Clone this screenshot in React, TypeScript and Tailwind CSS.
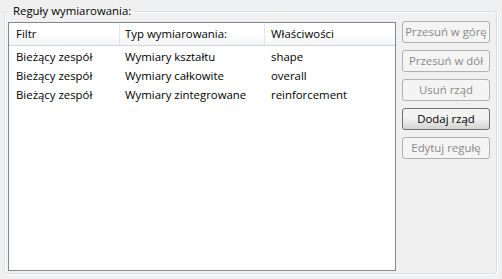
export default function App() {
  const rows = [
    ["Bieżący zespół", "Wymiary kształtu", "shape"],
    ["Bieżący zespół", "Wymiary całkowite", "overall"],
    ["Bieżący zespół", "Wymiary zintegrowane", "reinforcement"],
  ];
  const buttons = [
    { label: "Przesuń w górę", enabled: false },
    { label: "Przesuń w dół", enabled: false },
    { label: "Usuń rząd", enabled: false },
    { label: "Dodaj rząd", enabled: true },
    { label: "Edytuj regułę", enabled: false },
  ];

  return (
    <div className="w-[502px] h-[279px] bg-[#f0f0f0] pl-[4px] pt-[3px] text-[11.4px] text-black font-['Open_Sans','Noto_Sans',sans-serif] overflow-hidden">
      {/* Group box */}
      <fieldset className="w-[493px] h-[271px] border border-[#d5dfe5] rounded-[3px] shadow-[inset_1px_1px_0_#ffffff,1px_1px_0_#ffffff]">
        <legend className="ml-[5px] px-[3px] leading-[16px]">Reguły wymiarowania:</legend>

        <div className="flex">
          {/* List view */}
          <div className="ml-[3px] mt-[3px] w-[388px] h-[249px] border border-[#828790] bg-white">
            <div className="flex h-[23px] border-b border-[#d5d5d5] bg-gradient-to-b from-white from-50% to-[#f3f4f6]">
              <div className="w-[111px] pl-[7px] flex items-center border-r border-[#e3e5e8]">Filtr</div>
              <div className="w-[145px] pl-[5px] flex items-center border-r border-[#e3e5e8]">Typ wymiarowania:</div>
              <div className="flex-1 pl-[6px] flex items-center">Właściwości</div>
            </div>
            <div className="pt-[1px]">
              {rows.map((r, i) => (
                <div key={i} className="flex h-[19px] items-center">
                  <div className="w-[111px] pl-[7px]">{r[0]}</div>
                  <div className="w-[145px] pl-[5px]">{r[1]}</div>
                  <div className="flex-1 pl-[6px]">{r[2]}</div>
                </div>
              ))}
            </div>
          </div>

          {/* Buttons */}
          <div className="ml-[6px] mt-[2px] flex flex-col gap-[7px]">
            {buttons.map((b) => (
              <button
                key={b.label}
                className={
                  b.enabled
                    ? "w-[88px] h-[22px] rounded-[3px] border border-[#707070] bg-gradient-to-b from-[#f2f2f2] from-45% to-[#d4d4d4] text-black leading-none"
                    : "w-[88px] h-[22px] rounded-[3px] border border-[#adb2b5] bg-[#f4f4f4] text-[#8a8a8a] leading-none"
                }
              >
                {b.label}
              </button>
            ))}
          </div>
        </div>
      </fieldset>
    </div>
  );
}
